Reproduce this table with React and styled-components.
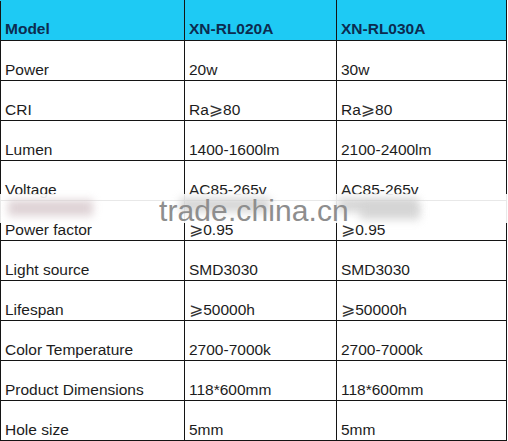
import styled, { createGlobalStyle } from 'styled-components';

const GlobalStyle = createGlobalStyle`
  body {
    margin: 0;
    background: #ffffff;
    font-family: "Liberation Sans", Arial, sans-serif;
  }
`;

const Wrap = styled.div`
  position: relative;
  width: 508px;
  height: 441px;
  overflow: hidden;
  background: #fff;
`;

const Table = styled.table`
  border-collapse: collapse;
  table-layout: fixed;
  width: 506px;
`;

const Cell = styled.td`
  border: 1px solid #141414;
  height: 37px;
  padding: 0 0 2px 4px;
  vertical-align: bottom;
  font-size: 15.5px;
  line-height: 16px;
  color: #1c1c1c;
  white-space: nowrap;
  overflow: hidden;
`;

const HeadCell = styled(Cell).attrs({ as: 'th' })`
  background: #1ecaf4;
  border-top-color: #1ecaf4;
  color: #0c2c50;
  font-weight: bold;
  text-align: left;
  height: 36px;
  padding-bottom: 3px;
`;

const Ge = styled.span`
  font-family: "DejaVu Sans", sans-serif;
  font-size: 17px;
  color: #333;
`;

/* watermark strip lying over the Voltage / Power factor rows */
const Band = styled.div`
  position: absolute;
  left: 0;
  right: 0;
  top: 194px;
  height: 29px;
  background: rgba(255, 255, 255, 0.9);
`;

const Blob = styled.div`
  position: absolute;
  top: ${p => p.$top}px;
  left: ${p => p.$left}px;
  width: ${p => p.$w}px;
  height: ${p => p.$h}px;
  background: ${p => p.$c || '#c8c8c8'};
  filter: blur(4px);
  opacity: 0.75;
`;

const Mark = styled.div`
  position: absolute;
  left: 159px;
  top: 194px;
  font-size: 30px;
  line-height: 34px;
  color: #8e8e8e;
  letter-spacing: 0.1px;
`;

const ge = <Ge>⩾</Ge>;

const rows = [
  ['Power', '20w', '30w'],
  ['CRI', <>Ra{ge}80</>, <>Ra{ge}80</>],
  ['Lumen', '1400-1600lm', '2100-2400lm'],
  ['Voltage', 'AC85-265v', 'AC85-265v'],
  ['Power factor', <>{ge}0.95</>, <>{ge}0.95</>],
  ['Light source', 'SMD3030', 'SMD3030'],
  ['Lifespan', <>{ge}50000h</>, <>{ge}50000h</>],
  ['Color Temperature', '2700-7000k', '2700-7000k'],
  ['Product Dimensions', '118*600mm', '118*600mm'],
  ['Hole size', '5mm', '5mm'],
];

export default function App() {
  return (
    <Wrap>
      <GlobalStyle />
      <Table>
        <colgroup>
          <col style={{ width: 184 }} />
          <col style={{ width: 152 }} />
          <col style={{ width: 170 }} />
        </colgroup>
        <thead>
          <tr>
            <HeadCell>Model</HeadCell>
            <HeadCell>XN-RL020A</HeadCell>
            <HeadCell>XN-RL030A</HeadCell>
          </tr>
        </thead>
        <tbody>
          {rows.map((r, i) => (
            <tr key={i}>
              <Cell>{r[0]}</Cell>
              <Cell>{r[1]}</Cell>
              <Cell>{r[2]}</Cell>
            </tr>
          ))}
        </tbody>
      </Table>
      <Band />
      <Blob $top={200} $left={8} $w={85} $h={16} $c="#d4c4c8" />
      <Blob $top={198} $left={180} $w={90} $h={14} />
      <Blob $top={198} $left={338} $w={80} $h={14} />
      <Blob $top={204} $left={360} $w={60} $h={16} $c="#d0d0d0" />
      <Mark>trade.china.cn</Mark>
    </Wrap>
  );
}
